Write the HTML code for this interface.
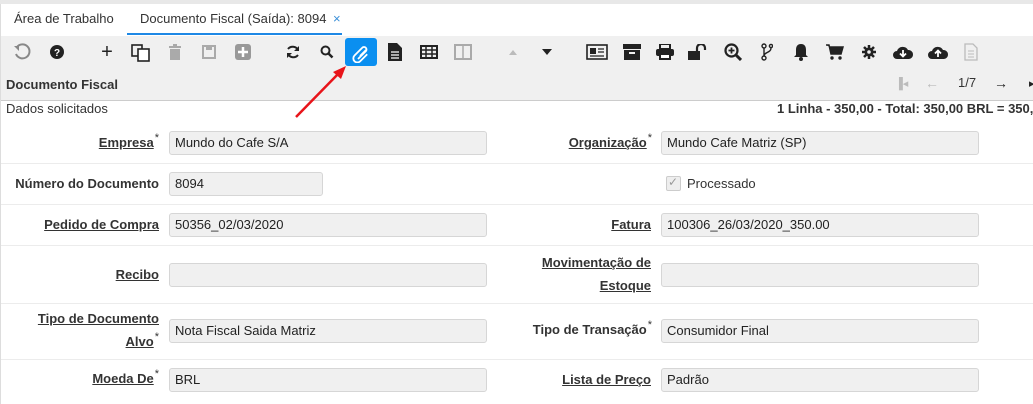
<!DOCTYPE html>
<html><head><meta charset="utf-8"><style>
*{margin:0;padding:0;box-sizing:border-box}
body{width:1033px;height:404px;overflow:hidden;background:#fff;font-family:"Liberation Sans",Arial,sans-serif;font-size:13px;color:#333;position:relative}
.a{position:absolute}
.top{left:0;top:0;width:1033px;height:4px;background:#e8e8e8}
.tabs{left:0;top:4px;width:1033px;height:32px;background:#fff;border-left:1px solid #ddd}
.tb{left:0;top:36px;width:1033px;height:65px;background:#f0f0f0;border-bottom:1px solid #ccc}
.ic{position:absolute;top:39px;width:26px;height:26px;display:flex;align-items:center;justify-content:center}
.lbl{position:absolute;font-weight:bold;text-align:right;color:#333;font-size:13px;line-height:23px}
.lbl u{text-decoration:underline}
.lbl s{text-decoration:none;font-size:11px;font-weight:normal;position:relative;top:-6px;margin-left:1px}
.f{position:absolute;height:24px;background:#f0f0f0;border:1px solid #d6d6d6;border-radius:3px;padding-left:5px;line-height:22px;font-size:13px;color:#222}
.sep{position:absolute;left:1px;width:1032px;height:1px;background:#ececec}
</style></head><body>
<div class="a top"></div>
<div class="a tabs"></div>
<div class="a" style="left:14px;top:11px;font-size:13px;color:#333">Área de Trabalho</div>
<div class="a" style="left:140px;top:11px;font-size:13px;color:#333">Documento Fiscal (Saída): 8094 <span style="color:#3a8fd8;margin-left:3px">×</span></div>
<div class="a" style="left:127px;top:33px;width:215px;height:2px;background:#1e88e5"></div>
<div class="a tb"></div>
<div class="a" style="left:0;top:36px;width:1px;height:368px;background:#ddd"></div>

<div class="ic" style="left:9px"><svg width="18" height="18" viewBox="0 0 18 18"><path d="M4 4 A7 7 0 1 1 3 11" fill="none" stroke="#888" stroke-width="2"/><path d="M1 3 L6 3 L6 8Z" fill="#888"/></svg></div>
<div class="ic" style="left:44px"><svg width="14" height="14"><circle cx="7" cy="7" r="7" fill="#222"/><text x="7" y="11" font-size="10" font-weight="bold" fill="#fff" text-anchor="middle" font-family="Liberation Sans">?</text></svg></div>
<div class="ic" style="left:94px;font-size:20px;color:#222">+</div>
<div class="ic" style="left:128px"><svg width="20" height="20"><rect x="1" y="3" width="10" height="11" fill="none" stroke="#222" stroke-width="1.6"/><rect x="7" y="7" width="11" height="12" fill="#fff" stroke="#222" stroke-width="1.6"/></svg></div>
<div class="ic" style="left:162px"><svg width="16" height="18"><rect x="2" y="3" width="12" height="2" fill="#aaa"/><rect x="6" y="1" width="4" height="2" fill="#aaa"/><rect x="3" y="6" width="10" height="11" fill="#aaa"/></svg></div>
<div class="ic" style="left:196px"><svg width="14" height="14"><rect x="1" y="1" width="12" height="12" fill="none" stroke="#aaa" stroke-width="2"/><rect x="4" y="1" width="6" height="4" fill="#aaa"/></svg></div>
<div class="ic" style="left:230px"><svg width="16" height="16"><rect width="16" height="16" rx="3" fill="#999"/><path d="M8 3v10M3 8h10" stroke="#fff" stroke-width="2.5"/></svg></div>
<div class="ic" style="left:280px"><svg width="16" height="16"><path d="M13 6A6 6 0 0 0 3 5M3 10A6 6 0 0 0 13 11" fill="none" stroke="#222" stroke-width="2"/><path d="M14 2v5h-5zM2 14v-5h5z" fill="#222"/></svg></div>
<div class="ic" style="left:314px"><svg width="14" height="14"><circle cx="5.5" cy="5.5" r="4" fill="none" stroke="#222" stroke-width="2"/><path d="M8.5 8.5l4 4" stroke="#222" stroke-width="2.5"/></svg></div>
<div class="a" style="left:345px;top:38px;width:32px;height:28px;background:#0a8ff0;border-radius:3px"></div>
<div class="ic" style="left:348px;top:40px"><svg width="20" height="20" viewBox="0 0 20 20"><path d="M7 16l8-8a2.5 2.5 0 0 0-3.5-3.5l-8 8a4 4 0 0 0 5.7 5.7l7-7M9 13l6-6" fill="none" stroke="#fff" stroke-width="1.8"/></svg></div>
<div class="ic" style="left:382px"><svg width="16" height="20"><path d="M1 1h9l5 5v13H1z" fill="#222"/><path d="M4 10h8M4 13h8M4 16h8" stroke="#fff" stroke-width="1.3"/></svg></div>
<div class="ic" style="left:416px"><svg width="18" height="14"><rect x="1" y="1" width="16" height="12" fill="none" stroke="#222" stroke-width="2"/><path d="M1 5h16M1 9h16M6 1v12M12 1v12" stroke="#222" stroke-width="1.5"/></svg></div>
<div class="ic" style="left:450px"><svg width="18" height="16"><rect x="1" y="1" width="16" height="14" fill="none" stroke="#aaa" stroke-width="2"/><path d="M9 1v14" stroke="#aaa" stroke-width="1.5"/></svg></div>
<div class="ic" style="left:500px"><svg width="8" height="5"><path d="M0 5L4 0L8 5z" fill="#bbb"/></svg></div>
<div class="ic" style="left:534px"><svg width="10" height="6"><path d="M0 0L10 0L5 6z" fill="#222"/></svg></div>
<div class="ic" style="left:584px"><svg width="22" height="16"><rect x="1" y="1" width="20" height="14" fill="none" stroke="#222" stroke-width="1.6"/><rect x="4" y="4" width="6" height="6" fill="#222"/><path d="M12 5h6M12 8h6M4 12h14" stroke="#222" stroke-width="1.3"/></svg></div>
<div class="ic" style="left:619px"><svg width="18" height="16"><rect x="0" y="0" width="18" height="5" fill="#222"/><rect x="1" y="6" width="16" height="10" fill="#222"/><rect x="6" y="8" width="6" height="2" fill="#f0f0f0"/></svg></div>
<div class="ic" style="left:652px"><svg width="18" height="16"><rect x="4" y="0" width="10" height="5" fill="none" stroke="#222" stroke-width="2"/><rect x="0" y="5" width="18" height="7" rx="2" fill="#222"/><rect x="4" y="10" width="10" height="5" fill="#fff" stroke="#222" stroke-width="2"/></svg></div>
<div class="ic" style="left:685px"><svg width="20" height="16"><rect x="0" y="7" width="12" height="9" fill="#222"/><path d="M9 7V4a4 4 0 0 1 8 0v2" fill="none" stroke="#222" stroke-width="2.2"/></svg></div>
<div class="ic" style="left:720px"><svg width="18" height="18"><circle cx="7.5" cy="7.5" r="6" fill="none" stroke="#222" stroke-width="2.2"/><path d="M12 12l5 5" stroke="#222" stroke-width="3"/><path d="M7.5 4.5v6M4.5 7.5h6" stroke="#222" stroke-width="1.8"/></svg></div>
<div class="ic" style="left:754px"><svg width="12" height="18"><circle cx="3" cy="3" r="2" fill="none" stroke="#222" stroke-width="1.4"/><circle cx="10" cy="3" r="1.6" fill="none" stroke="#222" stroke-width="1.4"/><circle cx="3" cy="15" r="2" fill="none" stroke="#222" stroke-width="1.4"/><path d="M3 5v8M10 5c0 5-7 4-7 8" fill="none" stroke="#222" stroke-width="1.4"/></svg></div>
<div class="ic" style="left:788px"><svg width="16" height="18"><path d="M8 1c-4 0-5 3-5 6v5l-2 2h14l-2-2V7c0-3-1-6-5-6z" fill="#222"/><circle cx="8" cy="16" r="2" fill="#222"/></svg></div>
<div class="ic" style="left:822px"><svg width="18" height="16"><path d="M0 1h3l2 9h10l2-7H4" fill="#222" stroke="#222" stroke-width="1.5"/><circle cx="6" cy="14" r="1.7" fill="#222"/><circle cx="14" cy="14" r="1.7" fill="#222"/></svg></div>
<div class="ic" style="left:856px"><svg width="14" height="14"><circle cx="7" cy="7" r="4.5" fill="#222"/><path d="M7 0v14M0 7h14M2 2l10 10M12 2L2 12" stroke="#222" stroke-width="2.5"/><circle cx="7" cy="7" r="1.8" fill="#f0f0f0"/></svg></div>
<div class="ic" style="left:890px"><svg width="22" height="16"><path d="M5 15a4 4 0 0 1 0-8 6 6 0 0 1 11-1 4.5 4.5 0 0 1 1 9z" fill="#222"/><path d="M11 6v6M8 9.5l3 3 3-3" fill="none" stroke="#fff" stroke-width="1.8"/></svg></div>
<div class="ic" style="left:925px"><svg width="22" height="16"><path d="M5 15a4 4 0 0 1 0-8 6 6 0 0 1 11-1 4.5 4.5 0 0 1 1 9z" fill="#222"/><path d="M11 13V7M8 9.5l3-3 3 3" fill="none" stroke="#fff" stroke-width="1.8"/></svg></div>
<div class="ic" style="left:958px"><svg width="14" height="18"><path d="M1 1h8l4 4v12H1z" fill="none" stroke="#bbb" stroke-width="1.3"/><path d="M4 8h6M4 11h6M4 14h6" stroke="#bbb"/></svg></div>

<div class="a" style="left:6px;top:77px;font-weight:bold;font-size:13px;color:#333">Documento Fiscal</div>
<div class="a" style="left:895px;top:77px;color:#bbb;font-size:11px">▐◂</div>
<div class="a" style="left:925px;top:75px;color:#bbb;font-size:14px">←</div>
<div class="a" style="left:958px;top:75px;color:#333;font-size:13px">1/7</div>
<div class="a" style="left:994px;top:75px;color:#222;font-size:14px;font-weight:bold">→</div>
<div class="a" style="left:1029px;top:77px;color:#222;font-size:11px">▸</div>

<div class="a" style="left:6px;top:101px;font-size:13px">Dados solicitados</div>
<div class="a" style="left:777px;top:101px;font-size:13px;font-weight:bold;white-space:nowrap">1 Linha - 350,00 - Total: 350,00 BRL = 350,00</div>

<div class="sep" style="top:163px"></div>
<div class="sep" style="top:204px"></div>
<div class="sep" style="top:245px"></div>
<div class="sep" style="top:303px"></div>
<div class="sep" style="top:359px"></div>

<div class="lbl" style="right:874px;top:131px"><u>Empresa</u><s>*</s></div>
<div class="f" style="left:169px;top:131px;width:318px">Mundo do Cafe S/A</div>
<div class="lbl" style="right:874px;top:172px">Número do Documento</div>
<div class="f" style="left:169px;top:172px;width:154px">8094</div>
<div class="lbl" style="right:874px;top:213px"><u>Pedido de Compra</u></div>
<div class="f" style="left:169px;top:213px;width:318px">50356_02/03/2020</div>
<div class="lbl" style="right:874px;top:263px"><u>Recibo</u></div>
<div class="f" style="left:169px;top:263px;width:318px"></div>
<div class="lbl" style="right:874px;top:307px;line-height:23px"><u>Tipo de Documento</u><br><u>Alvo</u><s>*</s></div>
<div class="f" style="left:169px;top:319px;width:318px">Nota Fiscal Saida Matriz</div>
<div class="lbl" style="right:874px;top:367px"><u>Moeda De</u><s>*</s></div>
<div class="f" style="left:169px;top:368px;width:318px">BRL</div>

<div class="lbl" style="right:381px;top:131px"><u>Organização</u><s>*</s></div>
<div class="f" style="left:661px;top:131px;width:318px">Mundo Cafe Matriz (SP)</div>
<div class="a" style="left:666px;top:176px;width:15px;height:15px;border:1px solid #ccc;border-radius:2px;background:#eee"></div>
<div class="a" style="left:668px;top:175px;color:#999;font-size:12px">✓</div>
<div class="a" style="left:687px;top:176px;font-size:13px">Processado</div>
<div class="lbl" style="right:382px;top:213px"><u>Fatura</u></div>
<div class="f" style="left:661px;top:213px;width:318px">100306_26/03/2020_350.00</div>
<div class="lbl" style="right:382px;top:251px"><u>Movimentação de</u><br><u>Estoque</u></div>
<div class="f" style="left:661px;top:263px;width:318px"></div>
<div class="lbl" style="right:381px;top:318px">Tipo de Transação<s>*</s></div>
<div class="f" style="left:661px;top:319px;width:318px">Consumidor Final</div>
<div class="lbl" style="right:382px;top:368px"><u>Lista de Preço</u></div>
<div class="f" style="left:661px;top:368px;width:318px">Padrão</div>

<svg class="a" style="left:0;top:0" width="1033" height="404"><path d="M296 117L340 72" stroke="#e8141a" stroke-width="2.5"/><path d="M346 66L333 72L341 79Z" fill="#e8141a"/></svg>
</body></html>
